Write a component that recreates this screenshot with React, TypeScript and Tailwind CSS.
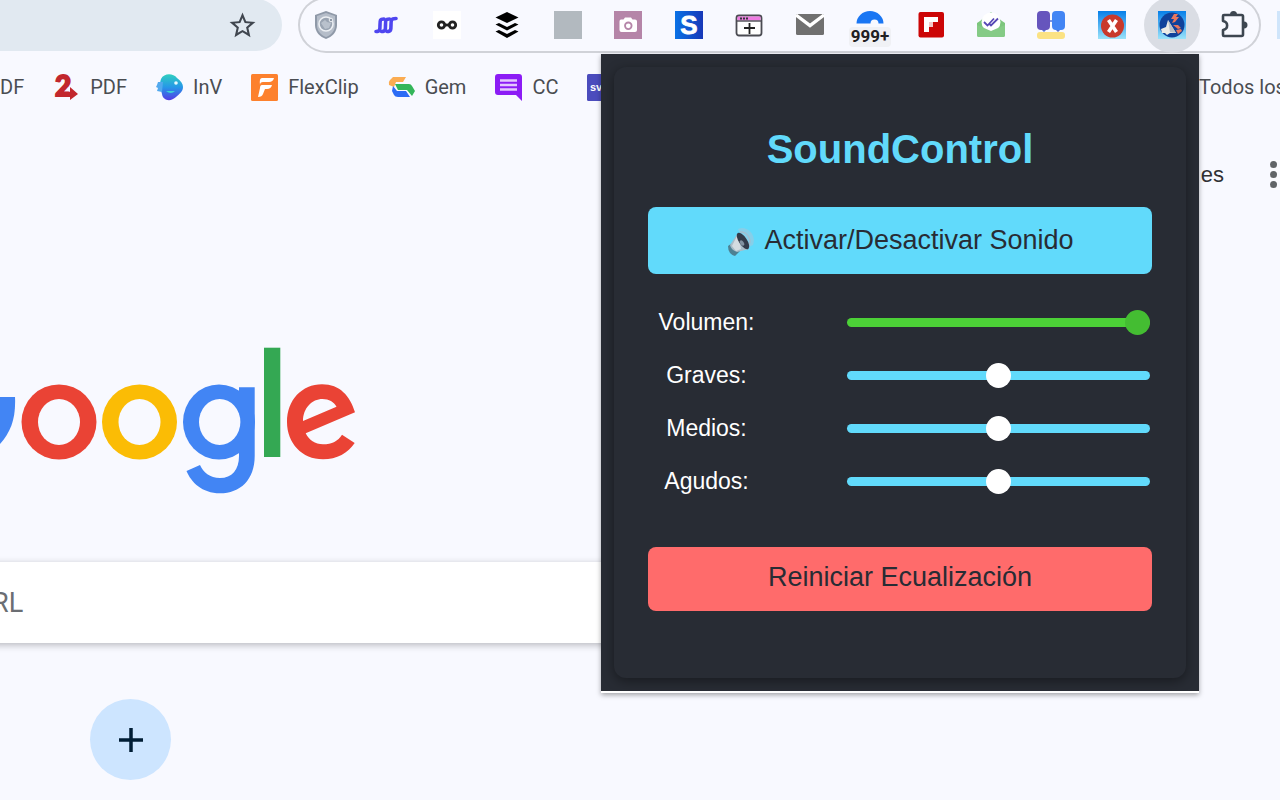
import { useState } from 'react'
import type { ReactNode } from 'react'
import { MdStarBorder } from 'react-icons/md'

interface IconItem {
  name: string
  icon: ReactNode
  active?: boolean
}

const extensions: IconItem[] = [
  {
    name: 'Shield',
    icon: (
      <>
        <path d="M14 0L25 4V14C25 21 20 26 14 28C8 26 3 21 3 14V4Z" fill="#8f99a8" />
        <path d="M14 2L23 5V14C23 20 19 24 14 26C9 24 5 20 5 14V5Z" fill="#b5bdc9" />
        <circle cx="14" cy="13" r="7" fill="#9aa4b2" stroke="#eceff3" strokeWidth="1.6" />
        <path d="M9 12L13 9L15 11L19 12L17 17L13 18Z" fill="#b9c1cc" />
        <circle cx="19" cy="9" r="1.8" fill="#8f99a8" stroke="#eceff3" />
      </>
    ),
  },
  {
    name: 'Waves',
    icon: (
      <g fill="none" stroke="#4f46f0" strokeWidth="3.6" strokeLinecap="round">
        <path d="M4 20.5C8 20.500 8 19 8 14C8 9 8 8 12 8" />
        <path d="M9.500 20.500C13.500 20.500 13.500 19 13.500 14C13.500 9 13.500 8 17.500 8" />
        <path d="M15 20.500C19 20.500 19 19 19 14C19 9 19 7.500 24 7.500" />
      </g>
    ),
  },
  {
    name: 'Glasses',
    icon: (
      <>
        <rect width="28" height="28" fill="#fff" />
        <g fill="none" stroke="#222" strokeWidth="2.8">
          <circle cx="8.500" cy="14" r="3.200" />
          <circle cx="19.500" cy="14" r="3.200" />
          <path d="M11.500 14H16.500" />
        </g>
      </>
    ),
  },
  {
    name: 'Layers',
    icon: (
      <>
        <path d="M14 1L25.500 6.500L14 12L2.500 6.500Z" fill="#000" />
        <path d="M2.500 13.500L6 12L14 16L22 12L25.500 13.500L14 19.500Z" fill="#000" />
        <path d="M2.500 20.500L6 19L14 23L22 19L25.500 20.500L14 27Z" fill="#000" />
      </>
    ),
  },
  { name: 'Blank', icon: <rect width="28" height="28" fill="#b2b9bf" /> },
  {
    name: 'Camera',
    icon: (
      <>
        <rect width="28" height="28" fill="#b585a8" />
        <path d="M7 8.500H9.500L11 6.500H17L18.500 8.500H21Q23 8.500 23 10.500V19Q23 21 21 21H7.500Q5.500 21 5.500 19V10.500Q5.500 8.500 7 8.500Z" fill="#fff" />
        <circle cx="14.300" cy="14.800" r="3.300" fill="none" stroke="#b585a8" strokeWidth="1.800" />
      </>
    ),
  },
  {
    name: 'S',
    icon: (
      <>
        <defs>
          <linearGradient id="s-bg">
            <stop offset="0" stopColor="#0a72e6" />
            <stop offset="1" stopColor="#1838b8" />
          </linearGradient>
        </defs>
        <rect width="28" height="28" fill="url(#s-bg)" />
        <text
          x="14"
          y="23"
          textAnchor="middle"
          fontSize="26"
          fontWeight="700"
          fontFamily="Liberation Sans, sans-serif"
          fill="#fff"
          stroke="#fff"
          strokeWidth="0.800"
        >
          S
        </text>
      </>
    ),
  },
  {
    name: 'New window',
    icon: (
      <>
        <rect x="1.500" y="4.500" width="25" height="20" rx="2.500" fill="#fff" stroke="#4a4b52" strokeWidth="1.800" />
        <path d="M2.500 5.500H25.500V9.500H2.500Z" fill="#ee7be2" />
        <path d="M2 10H26" stroke="#4a4b52" strokeWidth="1.400" />
        <path d="M5 7.500H13" stroke="#33343a" strokeWidth="1.800" strokeDasharray="2 1" />
        <path d="M14.500 12V23M9 17H20" stroke="#222" strokeWidth="1.800" />
      </>
    ),
  },
  {
    name: 'Mail',
    icon: (
      <>
        <rect y="3" width="28" height="21" rx="1.500" fill="#707070" />
        <path d="M0 4L14 14.500L28 4" fill="none" stroke="#fff" strokeWidth="3.400" />
      </>
    ),
  },
  {
    name: 'Counter',
    icon: (
      <>
        <path d="M0.500 12.500A13.500 12.500 0 0 1 27.500 12.500H22.500A4 4 0 0 0 14.500 12.500Z" fill="#1976f3" />
        <rect x="-7" y="16" width="42" height="20" rx="4" fill="#f0f1f5" />
        <text
          x="14"
          y="31"
          textAnchor="middle"
          fontSize="17"
          fontWeight="700"
          fontFamily="Roboto, sans-serif"
          fill="#1f2023"
        >
          999+
        </text>
      </>
    ),
  },
  {
    name: 'Flipboard',
    icon: (
      <>
        <rect x="1.500" y="1" width="25.500" height="25.500" rx="2" fill="#cc0607" />
        <path d="M7 6H21V11H16V16H12V21H7Z" fill="#fff" />
        <path d="M12 11H16V16H12Z" fill="#f2c9c9" />
      </>
    ),
  },
  {
    name: 'Checked mail',
    icon: (
      <>
        <path d="M0 12L3 10L14 1L25 10L28 12V24Q28 26 26 26H2Q0 26 0 24Z" fill="#7cc67d" />
        <circle cx="14" cy="11" r="9.500" fill="#fff" />
        <path d="M0 14L14 20L28 14V24Q28 26 26 26H2Q0 26 0 24Z" fill="#85cb86" />
        <path d="M7 11L10.500 14.500L17 7.500M12.500 13L14 14.500L21 7.500" fill="none" stroke="#5748b5" strokeWidth="1.800" />
      </>
    ),
  },
  {
    name: 'Panels',
    icon: (
      <>
        <path d="M13 10H16" stroke="#4f70d8" strokeWidth="1.500" />
        <path d="M4 18L7 21L10 18M18 18L21 21L24 18" fill="#5a72cf" />
        <rect y="0" width="13" height="19" rx="4" fill="#6655bd" />
        <rect x="15" y="0" width="13" height="19" rx="4" fill="#4285f4" />
        <rect y="21" width="28" height="7" rx="3" fill="#fbe283" />
      </>
    ),
  },
  {
    name: 'Close',
    icon: (
      <>
        <defs>
          <linearGradient id="sky" x1="0" y1="0" x2="0" y2="1">
            <stop offset="0" stopColor="#067fe9" />
            <stop offset="1" stopColor="#9be3fa" />
          </linearGradient>
        </defs>
        <rect width="28" height="28" fill="url(#sky)" />
        <circle cx="14.500" cy="15" r="11.500" fill="#c93a2c" />
        <path d="M10.500 9L18.500 21M18.500 9L10.500 21" stroke="#fff" strokeWidth="3.600" />
      </>
    ),
  },
  {
    name: 'SoundControl',
    active: true,
    icon: (
      <>
        <rect width="28" height="28" fill="url(#sky)" />
        <circle cx="14" cy="14" r="12.500" fill="#10429b" />
        <path d="M10 9L18 22L12 22L9 24L7 22L4 22L3 18L8 16Z" fill="#ecebe6" />
        <path d="M10 9L18 22L12 21Z" fill="#b9c0c8" />
        <path
          d="M13 8L16 3L20 3L18 6L21 6L17 11L14 12L16 8ZM15 14L20 14L23 17L20 18ZM18 19L23 18L24 20L20 23Z"
          fill="#e8775e"
        />
      </>
    ),
  },
  {
    name: 'Extensions',
    icon: (
      <>
        <path
          d="M5 4H22.500Q24 4 24 5.500V23.500Q24 25 22.500 25H5Q4 25 4 24V19C9.500 18 9.500 11 4 10V5Q4 4 5 4Z"
          fill="none"
          stroke="#3d4650"
          strokeWidth="2.600"
          strokeLinejoin="round"
        />
        <path d="M11 3.500A3.500 3.500 0 0 1 18 3.500ZM25 10.500A3.500 3.500 0 0 1 25 17.500Z" fill="#3d4650" />
      </>
    ),
  },
]

const bookmarks: IconItem[] = [
  {
    name: 'PDF',
    icon: (
      <>
        <text
          x="2"
          y="23"
          fontSize="28"
          fontWeight="900"
          fontFamily="Lato, sans-serif"
          stroke="#c2272d"
          strokeWidth="1.800"
          fill="#c2272d"
        >
          2
        </text>
        <path d="M10 19H17V14L25 21L17 27V24H10Z" fill="#c2272d" />
        <path d="M4 24H15V25H4Z" fill="#f8f9ff" />
      </>
    ),
  },
  {
    name: 'InV',
    icon: (
      <>
        <defs>
          <linearGradient id="inv" x1="0" y1="0" x2="0" y2="1">
            <stop offset="0" stopColor="#30cfc0" />
            <stop offset="0.500" stopColor="#2697e8" />
            <stop offset="1" stopColor="#533ce4" />
          </linearGradient>
        </defs>
        <path d="M5 6C8 0 17 0 21 5C25 8 27 11 27 14C27 19 23 21 20 24C15 29 7 28 6 21C5 16 3 11 5 6Z" fill="url(#inv)" />
        <path d="M7 9L2 9L1 12L0 14L2 15L1 18L6 19Z" fill="#52a9ee" />
        <circle cx="20" cy="10" r="1.800" fill="#e9fbff" />
        <path d="M10 18Q15 22 19 18Z" fill="#3ed2d5" />
      </>
    ),
  },
  {
    name: 'FlexClip',
    icon: (
      <>
        <rect y="1" width="27" height="27" rx="1.500" fill="#fd812d" />
        <path
          d="M11 5H23Q22 9 18 9H12Q9 9 9 12Q8 5 11 5ZM11 12H21Q20 16 16 16H14L12 21Q11 24 7 24L9 15Q9 12 11 12Z"
          fill="#fff"
        />
      </>
    ),
  },
  {
    name: 'Gem',
    icon: (
      <>
        <path d="M5 4H18L15 9H8L6 14L1 12Q0 9 2 7Z" fill="#fbac52" />
        <path d="M7 11H21Q23 11 24 13L27 18L24 23L19 17H10Z" fill="#34b65a" />
        <path d="M5 13L9 18H18L22 24H10Q7 24 6 22L4 18Z" fill="#2c6cf5" />
      </>
    ),
  },
  {
    name: 'CC',
    icon: (
      <>
        <path d="M3 1H24Q27 1 27 4V28L21 22H3Q0 22 0 19V4Q0 1 3 1Z" fill="#8c1cf5" />
        <path d="M5 7.500H22M5 12H22M5 16.500H22" stroke="#e4c8fd" strokeWidth="2.600" />
      </>
    ),
  },
  {
    name: 'SVG',
    icon: (
      <>
        <rect y="1" width="28" height="27" rx="1.500" fill="#4b4cbd" />
        <text x="3" y="18" fontSize="11" fontWeight="700" fontFamily="Liberation Sans, sans-serif" fill="#fff">
          sv
        </text>
      </>
    ),
  },
]

function Icon({ children }: { children: ReactNode }) {
  return (
    <svg viewBox="0 0 28 28" className="size-7 shrink-0 overflow-visible" aria-hidden="true">
      {children}
    </svg>
  )
}

function Toolbar() {
  return (
    <header className="flex h-[53px] items-end overflow-hidden">
      <div className="mb-0.5 flex h-[52px] w-[282px] shrink-0 items-center justify-end rounded-r-full bg-[#e1e9f1] pr-6">
        <button aria-label="Favorito" className="text-[#40464f]">
          <MdStarBorder size={31} />
        </button>
      </div>
      <div className="ml-4 flex h-14 flex-1 items-center justify-between rounded-full inset-ring-2 inset-ring-[#d0d2d8]">
        {extensions.map((ext) => (
          <button
            key={ext.name}
            aria-label={ext.name}
            className={`flex size-14 items-center justify-center rounded-full ${ext.active ? 'bg-[#dadde4]' : ''}`}
          >
            <Icon>{ext.icon}</Icon>
          </button>
        ))}
      </div>
      <div className="mb-3.5 ml-4 h-7 w-[3px] bg-[#cfe5fb]" />
    </header>
  )
}

function Bookmarks() {
  return (
    <nav className="flex h-[68px] items-center gap-[29px] overflow-hidden text-xl text-[#4a4d52]">
      <a href="#">DF</a>
      {bookmarks.map((item) => (
        <a key={item.name} href="#" className="flex items-center gap-[9px]">
          <Icon>{item.icon}</Icon>
          {item.name !== 'SVG' && item.name}
        </a>
      ))}
      <a href="#" className="ml-auto w-[81px] whitespace-nowrap">
        Todos los
      </a>
    </nav>
  )
}

function GoogleLogo() {
  return (
    <svg viewBox="0 0 380 180" className="mt-[103px] h-[180px] w-[380px]" role="img" aria-label="Google">
      <path d="M-10 67H15C16 88 11 102 0 114H-10Z" fill="#4285f4" />
      <circle cx="59" cy="92" r="37.500" fill="#ea4335" />
      <ellipse cx="59" cy="92" rx="21" ry="23" fill="#f8f9ff" />
      <circle cx="139.500" cy="92" r="37.500" fill="#fbbc05" />
      <ellipse cx="139.500" cy="92" rx="21" ry="23" fill="#f8f9ff" />
      <ellipse cx="219" cy="92" rx="36" ry="37.500" fill="#4285f4" />
      <path
        d="M239 57.300H254.700V126C254.700 150 240 163.300 220 163.300C202 163.300 191 152 186.500 141L200 135C203 142 210 148 220 148C232 148 239 140 239 126Z"
        fill="#4285f4"
      />
      <ellipse cx="219.700" cy="92" rx="20.700" ry="23" fill="#f8f9ff" />
      <rect x="264" y="17.700" width="16.300" height="109.300" fill="#34a853" />
      <path
        d="M355 82.300L305.700 103.300C309 110 315 114.300 323 114.300C332 114.300 338 111 342 104.700L354.700 113C348 123 337 129.300 323 129.300C302 129.300 287 113 287 92C287 70 302 54.300 322 54.300C340 54.300 350 66 355 82.300ZM303 91L336.500 76.700C334 72 329 69 322.500 69C312 69 303 78 303 91Z"
        fill="#ea4335"
      />
    </svg>
  )
}

interface SliderProps {
  id: string
  label: string
  value: number
  onChange: (value: number) => void
  green?: boolean
}

function Slider({ id, label, value, onChange, green }: SliderProps) {
  return (
    <div className="flex h-[53px] items-center">
      <label htmlFor={id} className="w-[117px] text-center text-[23px] text-white">
        {label}
      </label>
      <input
        id={id}
        type="range"
        min={0}
        max={100}
        value={value}
        onChange={(e) => onChange(Number(e.target.value))}
        className={`mr-0.5 ml-auto h-[9px] w-[303px] appearance-none rounded-full [&::-webkit-slider-thumb]:size-[25px] [&::-webkit-slider-thumb]:appearance-none [&::-webkit-slider-thumb]:rounded-full ${
          green
            ? 'bg-[#4cd137] [&::-webkit-slider-thumb]:bg-[#44bd32]'
            : 'bg-[#61dafb] [&::-webkit-slider-thumb]:bg-white'
        }`}
      />
    </div>
  )
}

function SpeakerIcon() {
  return (
    <svg viewBox="0 0 30 30" className="size-[30px]" aria-hidden="true">
      <path d="M12 3C20 -1 31 8 27 19L21 22Z" fill="#86cfe9" />
      <path d="M14 6C20 5 26 12 23 19" fill="none" stroke="#a3bfd0" strokeWidth="1.500" />
      <path d="M2 20L9 15L15 24L9 30Q2 28 2 20Z" fill="#4d8193" />
      <path d="M4 19L12 7L23 23L11 26Q5 24 4 19Z" fill="#a9bdc8" />
      <path d="M6 20L12 8L15 23L10 25Z" fill="#d3dce1" />
      <ellipse cx="17" cy="15" rx="4" ry="9.500" transform="rotate(-34 17 15)" fill="#323b49" />
      <ellipse cx="16" cy="17" rx="1.800" ry="3" transform="rotate(-34 16 17)" fill="#8292a0" />
    </svg>
  )
}

function SoundPopup() {
  const [muted, setMuted] = useState(false)
  const [volume, setVolume] = useState(100)
  const [bass, setBass] = useState(50)
  const [mids, setMids] = useState(50)
  const [treble, setTreble] = useState(50)

  const reset = () => {
    setBass(50)
    setMids(50)
    setTreble(50)
  }

  return (
    <section className="absolute top-[54px] right-[81px] w-[598px] border-b-2 border-white bg-[#282c34] p-[13px] font-['Liberation_Sans',Arial,sans-serif] shadow-[0_2px_5px_rgba(0,0,0,0.35)]">
      <div className="rounded-xl bg-[#282c34] px-[34px] pt-[62px] pb-[67px] shadow-[0_3px_12px_rgba(0,0,0,0.4)]">
        <h1 className="text-center text-[40px] leading-10 font-bold text-[#61dafb]">SoundControl</h1>
        <button
          aria-pressed={muted}
          onClick={() => setMuted(!muted)}
          className="mt-[38px] flex h-[67px] w-full items-center justify-center gap-2 rounded-lg bg-[#61dafb] text-[27px] text-[#282c34]"
        >
          <SpeakerIcon />
          Activar/Desactivar Sonido
        </button>
        <div className="mt-[22px]">
          <Slider id="volumen" label="Volumen:" value={volume} onChange={setVolume} green />
          <Slider id="graves" label="Graves:" value={bass} onChange={setBass} />
          <Slider id="medios" label="Medios:" value={mids} onChange={setMids} />
          <Slider id="agudos" label="Agudos:" value={treble} onChange={setTreble} />
        </div>
        <button
          onClick={reset}
          className="mt-[39px] h-16 w-full rounded-lg bg-[#ff6b6b] pb-1 text-[27px] text-[#282c34]"
        >
          Reiniciar Ecualización
        </button>
      </div>
    </section>
  )
}

export default function App() {
  return (
    <div className="relative min-h-screen overflow-hidden bg-[#f8f9ff] font-[Roboto,sans-serif]">
      <Toolbar />
      <Bookmarks />
      <main>
        <div className="flex h-[106px] items-center justify-end gap-[46px] font-['Liberation_Sans',Arial,sans-serif]">
          <a href="#" className="text-[22px] text-[#303134]">
            es
          </a>
          <button aria-label="Aplicaciones" className="flex w-[10px] flex-col items-start gap-[3px]">
            <span className="size-[7px] rounded-full bg-[#5f6368]" />
            <span className="size-[7px] rounded-full bg-[#5f6368]" />
            <span className="size-[7px] rounded-full bg-[#5f6368]" />
          </button>
        </div>
        <GoogleLogo />
        <input
          aria-label="Buscar"
          placeholder="RL"
          className="mt-[52px] -ml-2 block h-[81px] w-1/2 bg-white text-[27px] text-[#5f6368] shadow-[0_2px_7px_rgba(32,33,36,0.3)] outline-none placeholder:text-[#6b6e73]"
        />
        <button
          aria-label="Agregar acceso directo"
          className="mt-14 ml-[90px] flex size-[81px] items-center justify-center rounded-full bg-[#cde5ff]"
        >
          <svg viewBox="0 0 24 24" className="size-6" aria-hidden="true">
            <path d="M12 0V24M0 12H24" stroke="#001d35" strokeWidth="3.500" />
          </svg>
        </button>
      </main>
      <SoundPopup />
    </div>
  )
}
